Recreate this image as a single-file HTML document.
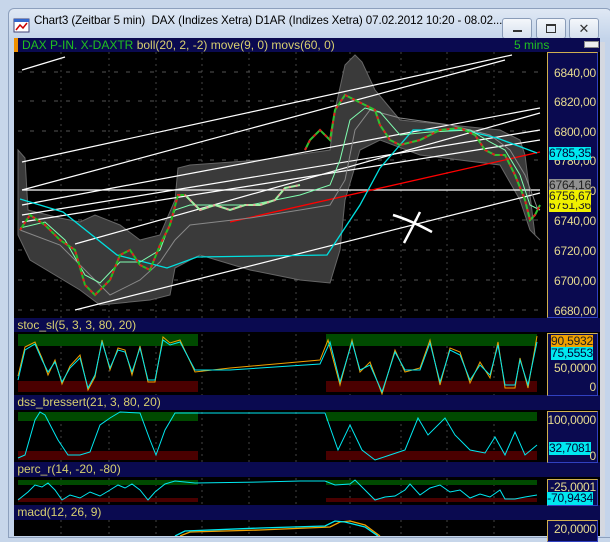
<!DOCTYPE html>
<html><head><meta charset="utf-8"><style>
body{margin:0;width:610px;height:536px;overflow:hidden;background:#c7d6ea;font-family:"Liberation Sans",sans-serif;position:relative}
.a{position:absolute}
.btn{position:absolute;top:18px;width:28px;height:19px;border:1px solid #8a9cb8;border-radius:3px;background:linear-gradient(#f4f7fb,#d6e0ee);}
.hdr{position:absolute;left:14px;width:586px;background:#0a0a50;font-size:12px;color:#d8d070;line-height:15px}
.ax{position:absolute;left:547px;width:49px;background:#0a0a50;border-left:1px solid #d0b050;border-top:1px solid #d0b050;border-right:1px solid #3040c0;border-bottom:1px solid #3040c0;font-size:12px;color:#e8dc90;text-align:right}
.ax div{position:absolute;right:1px;line-height:13px;letter-spacing:-0.2px}
</style></head><body>
<div class="a" style="left:8px;top:8px;width:602px;height:528px;background:linear-gradient(#dfe8f4,#c4d4ea 30px);border:1px solid #8da0bd;border-radius:6px 6px 0 0"></div>
<svg class="a" style="left:13px;top:17px" width="18" height="18"><rect x="1" y="2" width="15" height="13" fill="#fff" stroke="#447"/><rect x="1" y="2" width="15" height="3" fill="#36c"/><polyline points="3,13 7,8 10,11 14,6" fill="none" stroke="#c00" stroke-width="1.5"/></svg>
<div class="a" style="left:34px;top:14px;font-size:11.6px;color:#000;white-space:nowrap;letter-spacing:-0.1px">Chart3 (Zeitbar 5 min)&nbsp; DAX (Indizes Xetra) D1AR (Indizes Xetra) 07.02.2012 10:20 - 08.02...</div>
<div class="btn" style="left:502px"><div class="a" style="left:10px;top:11px;width:9px;height:2px;background:#333"></div></div>
<div class="btn" style="left:536px"><div class="a" style="left:9px;top:5px;width:8px;height:6px;border:1px solid #333;border-top-width:2px"></div></div>
<div class="btn" style="left:569px;font-size:13px;text-align:center;line-height:19px;color:#333">✕</div>
<div class="a" style="left:14px;top:42px;width:586px;height:494px;background:#000"></div>
<div class="a" style="left:600px;top:42px;width:5px;height:494px;background:#d4d8e0"></div>

<svg class="a" style="left:0;top:0" width="610" height="536">
<g stroke="#444" stroke-dasharray="2,4">
<line x1="61" y1="52" x2="61" y2="536"/><line x1="109" y1="52" x2="109" y2="536"/><line x1="156" y1="52" x2="156" y2="536"/><line x1="202" y1="52" x2="202" y2="536"/><line x1="249" y1="52" x2="249" y2="536"/><line x1="296" y1="52" x2="296" y2="536"/><line x1="350" y1="52" x2="350" y2="536"/><line x1="401" y1="52" x2="401" y2="536"/><line x1="447" y1="52" x2="447" y2="536"/><line x1="494" y1="52" x2="494" y2="536"/>
</g>
<g stroke="#555" stroke-dasharray="4,8">
<line x1="18" y1="72" x2="540" y2="72"/><line x1="18" y1="101" x2="540" y2="101"/><line x1="18" y1="131" x2="540" y2="131"/><line x1="18" y1="160" x2="540" y2="160"/><line x1="18" y1="220" x2="540" y2="220"/><line x1="18" y1="250" x2="540" y2="250"/><line x1="18" y1="280" x2="540" y2="280"/><line x1="18" y1="310" x2="540" y2="310"/>
</g>
<polygon fill="#3a3a3a" stroke="#666" points="18,150 25,158 28,210 60,218 80,222 95,215 120,225 140,240 160,235 175,200 178,168 190,165 260,160 330,150 335,110 345,65 355,55 362,62 375,90 400,120 450,125 500,130 520,140 525,155 535,235 540,240 530,230 520,200 500,165 420,155 380,140 360,150 345,200 340,250 330,283 300,280 250,270 200,255 190,260 175,268 170,295 150,300 100,305 80,290 30,260 18,235"/>
<g stroke="#fff" stroke-width="1.2" fill="none">
<line x1="22" y1="70" x2="65" y2="57"/>
<line x1="22" y1="162" x2="512" y2="55"/><line x1="22" y1="190" x2="505" y2="60"/>
<line x1="22" y1="205" x2="540" y2="108"/><line x1="22" y1="215" x2="540" y2="130"/><line x1="22" y1="222" x2="540" y2="140"/>
<line x1="22" y1="190" x2="540" y2="190"/>
<line x1="75" y1="244" x2="540" y2="113"/><line x1="75" y1="310" x2="540" y2="193"/>
<path d="M393,215 Q410,220 432,232 M420,212 Q412,228 404,243" stroke-width="2.5"/>
</g>
<polyline fill="none" stroke="#f00" stroke-width="1.3" points="230,222 540,152"/>
<polyline fill="none" stroke="#888" points="20,230 60,245 90,275 110,295 140,280 160,262 175,240 190,225 250,218 300,210 330,205 345,180 355,130 370,110 400,118 450,125 490,135 510,150 525,175 538,210"/>
<polyline fill="none" stroke="#00e0e0" stroke-width="1.3" points="20,199 63,212 117,255 167,268 197,257 327,255 360,205 380,168 413,130 463,130 497,138 537,153"/>
<polyline fill="none" stroke="#80ffb0" points="20,228 45,222 65,240 85,275 100,283 120,262 140,262 160,250 175,210 190,205 250,205 300,195 330,185 340,160 350,120 365,108 380,112 400,135 430,132 470,130 490,142 505,150 520,175 530,205 540,210"/>
<g fill="none" stroke-width="2">
<polyline stroke="#20c020" points="20,230 30,215 45,225 60,240 75,250 85,285 95,295 110,280 120,255 130,250 140,265 150,270 160,245 170,225 178,195 185,195"/>
<polyline stroke="#e02020" stroke-dasharray="3,4" points="20,230 30,215 45,225 60,240 75,250 85,285 95,295 110,280 120,255 130,250 140,265 150,270 160,245 170,225 178,195 185,195"/>
<polyline stroke="#a0f0a0" points="185,195 200,210 215,205 230,210 245,205 260,205 275,200 285,188 300,185"/>
<polyline stroke="#f0a0a0" stroke-dasharray="2,5" points="185,195 200,210 215,205 230,210 245,205 260,205 275,200 285,188 300,185"/>
<polyline stroke="#30c030" points="305,150 310,140 320,130 330,140 335,110 345,95 355,100 365,105 375,110 380,125 390,140 400,145 420,140 440,130 460,128 475,135 485,150 495,155 505,155 515,175 525,200 530,220 535,215 540,205"/>
<polyline stroke="#e02020" stroke-dasharray="3,5" points="305,150 310,140 320,130 330,140 335,110 345,95 355,100 365,105 375,110 380,125 390,140 400,145 420,140 440,130 460,128 475,135 485,150 495,155 505,155 515,175 525,200 530,220 535,215 540,205"/>
</g>
<rect x="18" y="334" width="180" height="12" fill="#004a00"/><rect x="326" y="334" width="211" height="12" fill="#004a00"/>
<rect x="18" y="381" width="180" height="11" fill="#4a0000"/><rect x="326" y="381" width="211" height="11" fill="#4a0000"/>
<polyline fill="none" stroke="#f0a000" points="18,376 25,347 35,342 42,358 48,375 55,360 62,384 70,366 80,355 88,390 95,377 102,340 110,370 118,348 125,350 132,375 140,346 148,382 155,382 163,337 170,343 180,340 195,372 230,368 320,360 328,340 340,385 352,340 360,372 370,362 382,394 395,350 405,372 420,368 430,340 440,385 450,348 460,352 470,383 480,362 490,378 498,342 505,388 515,388 520,358 528,388 537,336"/>
<polyline fill="none" stroke="#00e8f0" points="18,380 25,350 35,344 42,360 48,372 55,362 62,382 70,368 80,358 88,388 95,375 102,342 110,368 118,350 125,352 132,372 140,348 148,380 155,380 163,340 170,345 180,342 195,370 230,370 320,364 330,342 340,382 352,342 360,370 370,365 382,392 395,352 405,370 420,370 430,343 440,382 450,350 460,355 470,380 480,365 490,375 498,345 505,385 515,385 520,360 528,385 537,342"/>
<rect x="18" y="412" width="180" height="9" fill="#004a00"/><rect x="326" y="412" width="211" height="9" fill="#004a00"/>
<rect x="18" y="451" width="180" height="9" fill="#4a0000"/><rect x="326" y="451" width="211" height="9" fill="#4a0000"/>
<polyline fill="none" stroke="#00e8f0" points="18,458 25,455 35,420 40,412 45,415 58,440 68,455 80,455 90,452 100,425 110,418 120,412 140,413 150,440 156,455 165,430 175,413 195,413 325,413 338,450 350,425 362,450 375,460 390,455 405,450 418,418 428,435 445,418 455,435 470,450 485,453 495,437 505,455 515,432 525,455 537,445"/>
<rect x="18" y="480" width="180" height="5" fill="#004a00"/><rect x="326" y="480" width="211" height="5" fill="#004a00"/>
<rect x="18" y="498" width="180" height="4" fill="#4a0000"/><rect x="326" y="498" width="211" height="4" fill="#4a0000"/>
<polyline fill="none" stroke="#00e8f0" points="18,500 28,492 35,485 42,487 48,483 55,490 62,500 70,495 80,498 90,492 100,496 110,490 118,485 125,488 132,484 140,490 148,500 155,492 165,484 175,481 195,483 260,482 300,481 325,481 335,485 350,484 355,480 365,490 375,500 385,497 395,496 405,490 410,484 420,495 430,488 440,485 450,492 460,490 470,498 480,494 490,497 500,490 505,499 515,499 525,497 537,495"/>
<polyline fill="none" stroke="#f0a000" stroke-width="1.3" points="180,536 190,532 260,530 330,527 340,522 350,521 365,525 380,536"/>
<polyline fill="none" stroke="#00e8f0" stroke-width="1.3" points="175,536 185,531 260,528 325,526 335,521 345,522 365,527 378,536"/>
</svg>

<div class="hdr" style="top:38px;height:14px"><span class="a" style="left:0;top:0;width:4px;height:14px;background:#f09000"></span><span style="margin-left:8px;color:#20c020">DAX P-IN. X-DAXTR</span> boll(20, 2, -2) move(9, 0) movs(60, 0)<span class="a" style="left:500px;color:#20c020">5 mins</span><span class="a" style="left:570px;top:3px;width:13px;height:5px;background:#eee;border:1px solid #888"></span></div>
<div class="hdr" style="top:318px;height:14px">&nbsp;stoc_sl(5, 3, 3, 80, 20)</div>
<div class="hdr" style="top:395px;height:15px">&nbsp;dss_bressert(21, 3, 80, 20)</div>
<div class="hdr" style="top:462px;height:15px">&nbsp;perc_r(14, -20, -80)</div>
<div class="hdr" style="top:505px;height:15px">&nbsp;macd(12, 26, 9)</div>

<div class="ax" style="top:52px;height:264px">
<div style="top:14px">6840,00</div><div style="top:43px">6820,00</div><div style="top:73px">6800,00</div><div style="top:102px">6780,00</div><div style="top:132px">6760,00</div><div style="top:162px">6740,00</div><div style="top:192px">6720,00</div><div style="top:222px">6700,00</div><div style="top:252px">6680,00</div>
<div style="top:94px;right:6px;background:#00e8f0;color:#003">6785,35</div>
<div style="top:126px;right:6px;background:#909090;color:#222">6764,16</div>
<div style="top:146px;right:6px;background:#f0f000;color:#222">6751,36</div>
<div style="top:137px;right:6px;background:#f0f000;color:#222">6756,67</div>
</div>
<div class="ax" style="top:333px;height:61px">
<div style="top:1px;right:4px;background:#f0a000;color:#222">90,5932</div>
<div style="top:13px;right:4px;background:#00e8f0;color:#003">75,5553</div>
<div style="top:28px">50,0000</div><div style="top:47px">0</div></div>
<div class="ax" style="top:411px;height:50px"><div style="top:2px">100,0000</div><div style="top:30px;right:6px;background:#00e8f0;color:#003">32,7081</div><div style="top:38px">0</div></div>
<div class="ax" style="top:479px;height:25px"><div style="top:1px">-25,0001</div><div style="top:12px;right:4px;background:#00e8f0;color:#003">-70,9434</div></div>
<div class="ax" style="top:520px;height:20px"><div style="top:2px">20,0000</div></div>
</body></html>
